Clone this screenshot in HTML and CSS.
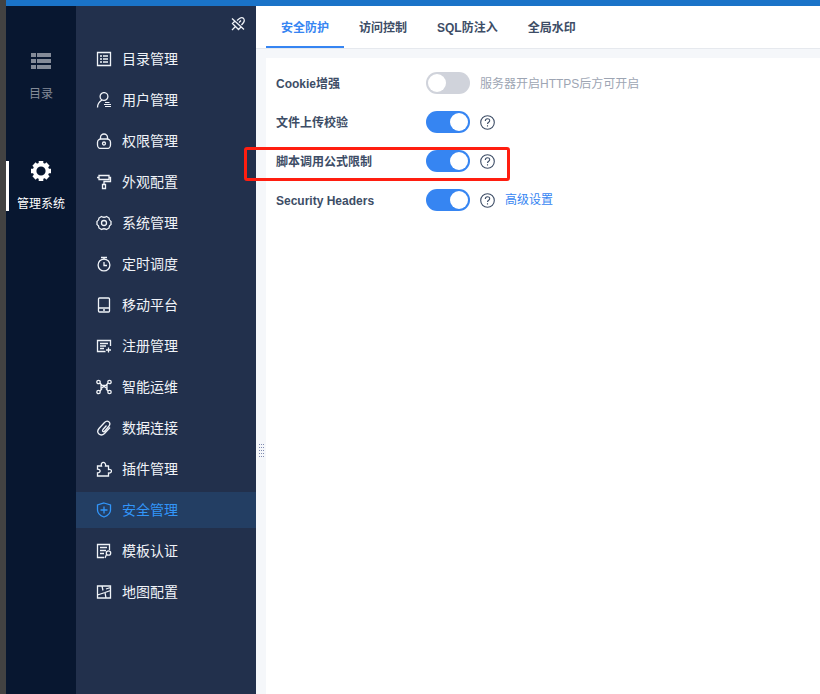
FILE: index.html
```html
<!DOCTYPE html>
<html lang="zh-CN">
<head>
    <meta charset="UTF-8">
    <meta name="viewport" content="width=device-width, initial-scale=1.0">
    <title>管理系统</title>
    <link rel="stylesheet" href="styles.css">
</head>
<body>
<div class="app">
    <nav class="rail">
        <a class="rail-item" href="#directory">
            <svg class="rail-icon" viewBox="0 0 20 20" fill="currentColor"><path d="M0 2h5v4H0zM6 2h14v4H6zM0 8h5v4H0zM6 8h14v4H6zM0 14h5v4H0zM6 14h14v4H6z"/></svg>
            <span>目录</span>
        </a>
        <a class="rail-item active" href="#system">
            <svg class="rail-icon" viewBox="0 0 20 20">
                <circle cx="10" cy="10" r="6.4" fill="none" stroke="currentColor" stroke-width="3.6"/>
                <path d="M10 0v3M10 17v3M0 10h3M17 10h3M3 3l2 2M15 15l2 2M17 3l-2 2M5 15l-2 2" stroke="currentColor" stroke-width="4.6"/>
            </svg>
            <span>管理系统</span>
        </a>
    </nav>

    <aside class="sidebar">
        <button class="pin" type="button" aria-label="取消固定">
            <svg class="icon" viewBox="0 0 16 16"><path d="M2 2.500l12 11M5 5L2.500 7.500l6 6L11 11M7 4.500l2.500-2Q12 .8 13.600 2.500Q15 4.500 13.500 6.500l-2 2.500M5.500 10.500L2 14M9 6.500l2-2"/></svg>
        </button>
        <ul class="menu">
            <li><a href="#m1"><svg class="icon" viewBox="0 0 16 16"><path d="M1.500 1.500h13v13h-13zM4 5h2M7 5h5M4 8h2M7 8h5M4 11h2M7 11h5"/></svg>目录管理</a></li>
            <li><a href="#m2"><svg class="icon" viewBox="0 0 16 16"><circle cx="8" cy="4.500" r="3.900"/><path d="M1.500 15.500c0-4 2-6 4.500-7.500"/><path stroke-width="1" d="M9 10.500h4.500M8 12.500h7M9 14.500h6"/></svg>用户管理</a></li>
            <li><a href="#m3"><svg class="icon" viewBox="0 0 16 16"><rect x="1.500" y="6" width="13" height="9.500" rx="3.500"/><path d="M4.500 6V4.500a3.500 3.500 0 0 1 7 0V6"/><circle cx="8" cy="10.500" r="1.500"/></svg>权限管理</a></li>
            <li><a href="#m4"><svg class="icon" viewBox="0 0 16 16"><path d="M3 1.500h10v4H3zM1 3.500h2M13 3.500h1.500v4H8v3M6.500 10.500h3v4h-3z"/></svg>外观配置</a></li>
            <li><a href="#m5"><svg class="icon" viewBox="0 0 16 16"><path d="M5.500 1.500Q8 3 10.500 1.500L13 3Q13 5.500 15 6.500v3Q13 10.500 13 13l-2.500 1.500Q8 13 5.500 14.500L3 13Q3 10.500 1 9.500v-3Q3 5.500 3 3z"/><circle cx="8" cy="8" r="2.500"/></svg>系统管理</a></li>
            <li><a href="#m6"><svg class="icon" viewBox="0 0 16 16"><circle cx="8" cy="9" r="5.900"/><path d="M5 1.500h6M8 1.500v2M8 6v3.500h3"/></svg>定时调度</a></li>
            <li><a href="#m7"><svg class="icon" viewBox="0 0 16 16"><rect x="2.500" y="1" width="11" height="14" rx="1"/><path d="M3 11h10M7 13h2"/></svg>移动平台</a></li>
            <li><a href="#m8"><svg class="icon" viewBox="0 0 16 16"><path d="M9.500 13.500h-8v-11h13V8M4 5.500h8M4 8h6M4 10.500h4M12.500 9.500v5M10 12h5"/></svg>注册管理</a></li>
            <li><a href="#m9"><svg class="icon" viewBox="0 0 16 16"><circle cx="2.500" cy="3" r="1.700"/><circle cx="13.500" cy="3" r="1.700"/><circle cx="2.500" cy="13" r="1.700"/><circle cx="13.500" cy="13" r="1.700"/><path d="M4 4l2 2.500h4L12 4M4 12l2-2.500M10 9.500l2 2.500M5 5.500v4l3-2 3 2v-4"/></svg>智能运维</a></li>
            <li><a href="#m10"><svg class="icon" viewBox="0 0 16 16"><path d="M10.500 5.500L7 9.500c-1.200 1.800.5 3 1.800 1.500l4.200-5c2.500-3.500-1.500-6.500-4.500-3.500L3 8.500c-3.500 4.500 1.500 8.500 5.500 5l5.500-6"/></svg>数据连接</a></li>
            <li><a href="#m11"><svg class="icon" viewBox="0 0 16 16"><path d="M1.500 5h4C4 .2 10.500.2 9.500 5h3v3.500c4-1 4 4 0 3.500v3h-11v-3c3.500 0 3.500-4 0-3.800z"/></svg>插件管理</a></li>
            <li><a class="active" href="#m12"><svg class="icon" viewBox="0 0 16 16"><path d="M8 1l6.500 2v5c0 3.500-2.500 5.500-6.500 7-4-1.500-6.500-3.500-6.500-7V3zM8 4.500v7M4.500 8h7"/></svg>安全管理</a></li>
            <li><a href="#m13"><svg class="icon" viewBox="0 0 16 16"><path d="M8 14.500H1.500v-13h12V7M4 4.500h7M4 7.500h6M4 10.500h4M10.500 11.500L9 15"/><circle cx="12.500" cy="10" r="2.200"/></svg>模板认证</a></li>
            <li><a href="#m14"><svg class="icon" viewBox="0 0 16 16"><path d="M1.500 2h13v12h-13zM6 2l1 4.500M1.500 11L9 8.500l5.500-2M9 8.500l1 5.500M14.500 3.500L10 5"/></svg>地图配置</a></li>
        </ul>
    </aside>

    <main class="content">
        <div class="tabs" role="tablist">
            <button class="tab active" type="button" role="tab" aria-selected="true">安全防护</button>
            <button class="tab" type="button" role="tab">访问控制</button>
            <button class="tab" type="button" role="tab">SQL防注入</button>
            <button class="tab" type="button" role="tab">全局水印</button>
        </div>
        <div class="body">
            <div class="splitter"></div>
            <form class="panel">
                <div class="row">
                    <label for="cookie">Cookie增强</label>
                    <input class="switch" type="checkbox" id="cookie">
                    <span class="hint">服务器开启HTTPS后方可开启</span>
                </div>
                <div class="row">
                    <label for="upload">文件上传校验</label>
                    <input class="switch" type="checkbox" id="upload" checked>
                    <button class="help" type="button" aria-label="帮助"><svg class="icon" viewBox="0 0 15 15"><circle cx="7.500" cy="7.500" r="6.800"/><path d="M5.300 6C5.300 3 9.700 3 9.700 5.700C9.700 7.300 7.500 7.300 7.500 9M7.500 10.300v1.300"/></svg></button>
                </div>
                <div class="row marked">
                    <label for="script">脚本调用公式限制</label>
                    <input class="switch" type="checkbox" id="script" checked>
                    <button class="help" type="button" aria-label="帮助"><svg class="icon" viewBox="0 0 15 15"><circle cx="7.500" cy="7.500" r="6.800"/><path d="M5.300 6C5.300 3 9.700 3 9.700 5.700C9.700 7.300 7.500 7.300 7.500 9M7.500 10.300v1.300"/></svg></button>
                </div>
                <div class="row">
                    <label for="headers">Security Headers</label>
                    <input class="switch" type="checkbox" id="headers" checked>
                    <button class="help" type="button" aria-label="帮助"><svg class="icon" viewBox="0 0 15 15"><circle cx="7.500" cy="7.500" r="6.800"/><path d="M5.300 6C5.300 3 9.700 3 9.700 5.700C9.700 7.300 7.500 7.300 7.500 9M7.500 10.300v1.300"/></svg></button>
                    <a class="more" href="#advanced">高级设置</a>
                </div>
            </form>
        </div>
    </main>
</div>
</body>
</html>
```

FILE: styles.css
```css
* {
    box-sizing: border-box;
}

body {
    margin: 0;
    background-color: #424242;
    font-family: "Liberation Sans", "Noto Sans CJK SC", sans-serif;
    font-size: 12px;
    line-height: 20px;
    color: #3d4d66;
}

a {
    text-decoration: none;
}

button {
    padding: 0;
    border: none;
    background: none;
    color: inherit;
    font: inherit;
    cursor: pointer;
}

.app {
    display: flex;
    min-height: 100vh;
    margin-left: 6px;
    border-top: 6px solid #1a73c8;
}

.icon {
    display: block;
    flex: none;
    width: 16px;
    height: 16px;
    fill: none;
    stroke: currentColor;
    stroke-width: 1.3;
}

/* left rail */
.rail {
    display: flex;
    flex-direction: column;
    flex: none;
    gap: 60px;
    width: 70px;
    padding-top: 45px;
    background-color: #081730;
}

.rail-item {
    display: flex;
    flex-direction: column;
    align-items: center;
    justify-content: space-between;
    height: 50px;
    color: #848b98;
    line-height: 14px;
}

.rail-item.active {
    padding-right: 3px;
    border-left: 3px solid #fff;
    color: #fff;
}

.rail-icon {
    width: 20px;
    height: 20px;
}

/* menu */
.sidebar {
    display: flex;
    flex-direction: column;
    flex: none;
    width: 180px;
    padding-top: 10px;
    background-color: #22304c;
    color: #f0f3f8;
}

.pin {
    align-self: flex-end;
    margin-right: 10px;
}

.menu {
    display: flex;
    flex-direction: column;
    gap: 5px;
    margin: 9px 0 0;
    padding: 0;
    list-style: none;
}

.menu a {
    display: flex;
    align-items: center;
    gap: 10px;
    height: 36px;
    padding-left: 20px;
    color: inherit;
    font-size: 14px;
}

.menu a.active {
    background-color: #233e63;
    color: #3296fa;
}

/* content */
.content {
    display: flex;
    flex-direction: column;
    flex: 1;
    background-color: #f5f7fa;
}

.tabs {
    display: flex;
    padding-left: 10px;
    border-bottom: 1px solid #e6e9ee;
    background-color: #fff;
}

.tab {
    height: 42px;
    padding: 4px 15px 0;
    border-bottom: 2px solid transparent;
    font-weight: bold;
}

.tab.active {
    border-bottom-color: #3685f2;
    color: #3685f2;
}

.body {
    display: flex;
    flex: 1;
    padding-top: 9px;
}

.splitter {
    align-self: center;
    width: 5px;
    height: 13px;
    margin: 148px 2px 0 3px;
    background-image:
        repeating-linear-gradient(to bottom, transparent 0 1px, #f5f7fa 1px 3px),
        repeating-linear-gradient(to right, #7f8ab0 0 1px, transparent 1px 2px);
}

.panel {
    display: flex;
    flex-direction: column;
    flex: 1;
    gap: 15px;
    padding: 13px 10px;
    background-color: #fff;
}

.row {
    position: relative;
    display: flex;
    align-items: center;
    gap: 10px;
    height: 24px;
}

.row label {
    width: 140px;
    padding-top: 2px;
    font-weight: bold;
}

.switch {
    display: flex;
    width: 44px;
    height: 22px;
    margin: 0;
    padding: 2px;
    border-radius: 11px;
    background-color: #d0d3db;
    appearance: none;
    cursor: pointer;
}

.switch::before {
    content: "";
    width: 18px;
    height: 18px;
    border-radius: 50%;
    background-color: #fff;
}

.switch:checked {
    justify-content: flex-end;
    background-color: #3685f2;
}

.help .icon {
    width: 15px;
    height: 15px;
    stroke-width: 1.1;
}

.hint {
    padding-top: 2px;
    color: #9da5b3;
}

.more {
    color: #3685f2;
}

.marked::after {
    content: "";
    position: absolute;
    top: -2px;
    left: -32px;
    width: 260px;
    height: 28px;
    border: 3px solid #ff1e10;
    border-radius: 3px;
    pointer-events: none;
}
```
